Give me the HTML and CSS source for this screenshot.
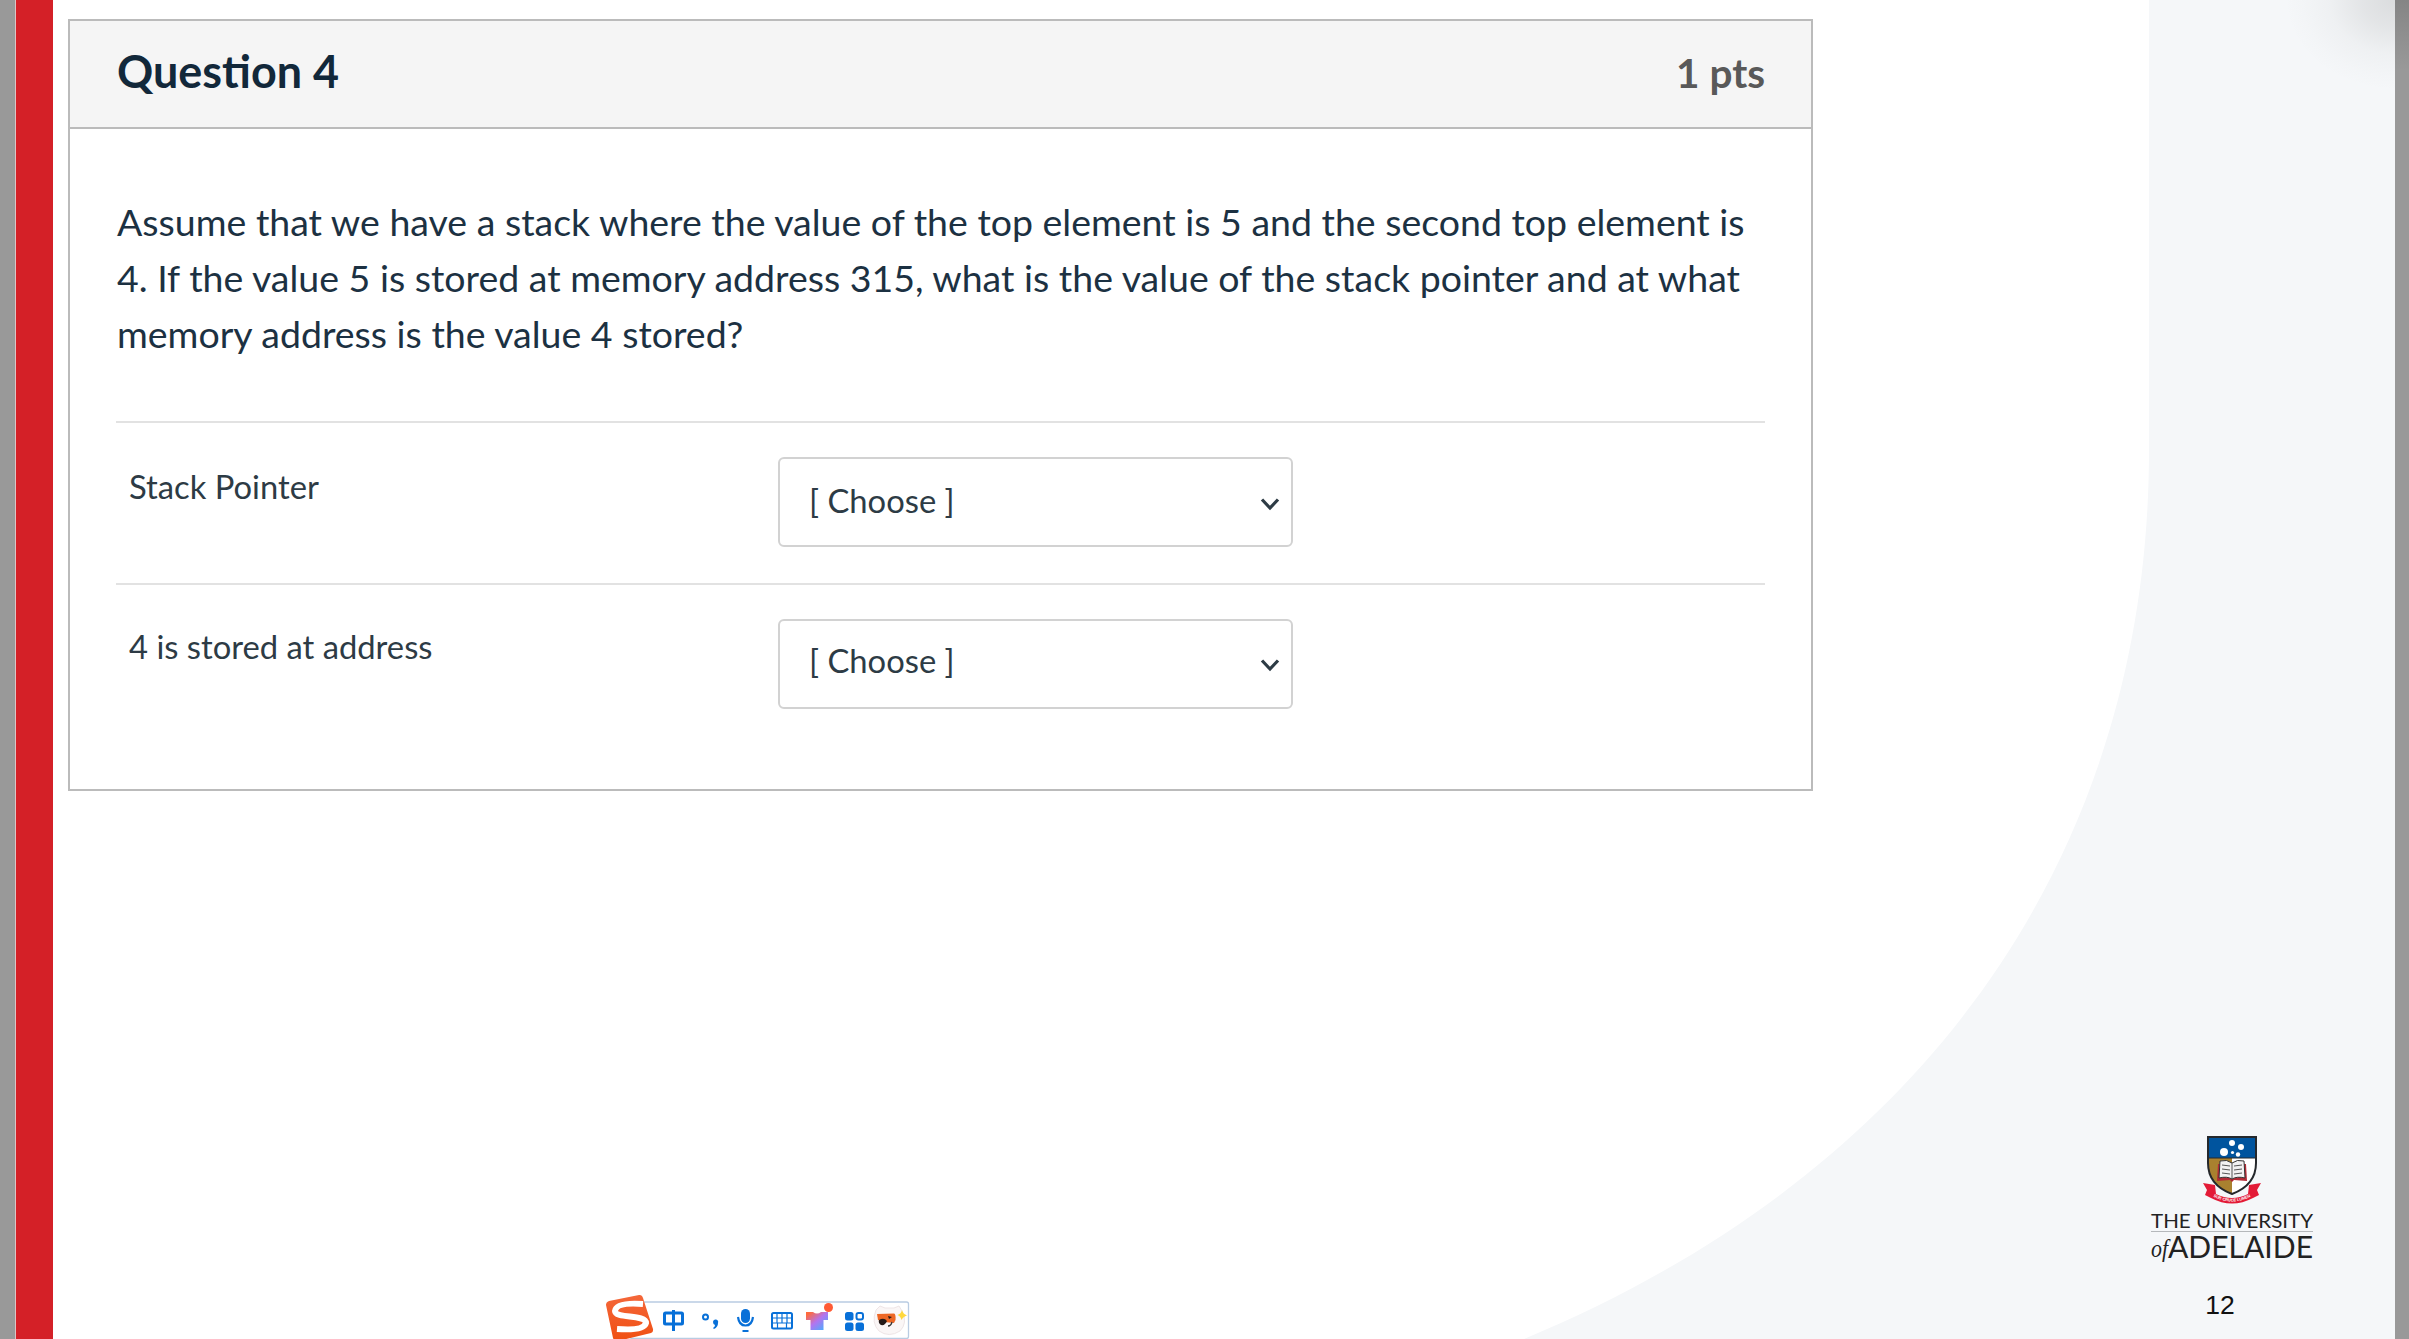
FILE: index.html
```
<!DOCTYPE html>
<html lang="en">
<head>
<meta charset="utf-8">
<title>Question 4</title>
<link rel="stylesheet" href="styles.css">
</head>
<body>
<div class="viewer">
  <div class="accent"></div>
  <main class="slide">
    <svg class="backdrop" width="2342" height="1339" viewBox="53 0 2342 1339" aria-hidden="true">
      <path d="M2149 0V450C2149 850 1930 1170 1524 1339H2395V0Z" fill="#f5f7f9"/>
    </svg>
    <section class="card">
      <header class="card-head">
        <h1 class="title">Question 4</h1>
        <span class="points">1 pts</span>
      </header>
      <div class="card-body">
        <p class="prompt">Assume that we have a stack where the value of the top element is 5 and the second top element is<br>4. If the value 5 is stored at memory address 315, what is the value of the stack pointer and at what<br>memory address is the value 4 stored?</p>
        <div class="row">
          <span class="label">Stack Pointer</span>
          <div class="select"><span class="value">[ Choose ]</span><svg class="chevron" width="20" height="14" viewBox="0 0 20 14"><path d="M2 2.500L10 11L18 2.500" fill="none" stroke="#2d3b45" stroke-width="3.200"/></svg></div>
        </div>
        <div class="row row-last">
          <span class="label">4 is stored at address</span>
          <div class="select"><span class="value">[ Choose ]</span><svg class="chevron" width="20" height="14" viewBox="0 0 20 14"><path d="M2 2.500L10 11L18 2.500" fill="none" stroke="#2d3b45" stroke-width="3.200"/></svg></div>
        </div>
      </div>
    </section>
    <footer class="brand">
      <svg class="crest" width="60" height="70" viewBox="0 0 60 70" aria-hidden="true">
        <path d="M1 48L13 50L14 59Q30 67 46 59L47 50L59 48L55 55L57 60L51 63Q30 74 9 63L3 60L5 55Z" fill="#e31b37"/>
        <path d="M6 2H54V28Q54 50 30 59Q6 50 6 28Z" fill="#fff"/>
        <path d="M6 2H54V23H6Z" fill="#00549e"/>
        <path d="M6 23H30V59Q6 50 6 28Z" fill="#a9812f"/>
        <path d="M6 2H54V28Q54 50 30 59Q6 50 6 28Z" fill="none" stroke="#25282c" stroke-width="2"/>
        <path d="M6 23H54" stroke="#25282c" stroke-width="1"/>
        <g fill="#fff"><circle cx="30" cy="8" r="3"/><circle cx="39" cy="12" r="3"/><circle cx="22" cy="17" r="4"/><circle cx="30.500" cy="17.500" r="1.600"/><circle cx="36" cy="19.500" r="2.200"/></g>
        <path d="M16 29L15 46L28 45L30 47L32 45L45 46L44 29" fill="#b32a35"/>
        <path d="M18 26Q25 24 30 28Q35 24 42 26L43 43Q35 41 30 44Q25 41 17 43Z" fill="#f2f2f2" stroke="#333" stroke-width="1"/>
        <path d="M30 28V44M20 30L28 31M20 34L28 35M20 38L28 39M32 31L40 30M32 35L40 34M32 39L40 38" stroke="#555" stroke-width="1"/>
        <path id="motto" d="M7 59Q30 74 53 59" fill="none"/>
        <text class="motto"><textPath href="#motto" startOffset="50%" text-anchor="middle">SUB CRUCE LUMEN</textPath></text>
      </svg>
      <svg class="wordmark" width="178" height="58" viewBox="-4 -4 178 58">
        <text class="uni" x="2" y="17.500" textLength="162" lengthAdjust="spacingAndGlyphs">THE UNIVERSITY</text>
        <path d="M2 21.500H164" stroke="#b5b8bb"/>
        <text class="of" x="2" y="47" textLength="17" lengthAdjust="spacingAndGlyphs">of</text>
        <text class="ade" x="19" y="47.500" textLength="145" lengthAdjust="spacingAndGlyphs">ADELAIDE</text>
      </svg>
      <span class="page-no">12</span>
    </footer>
    <div class="corner-shade"></div>
  </main>
  <div class="edge"></div>
  <svg class="ime" width="310" height="46" viewBox="603 1293 310 46" aria-hidden="true">
    <defs>
      <linearGradient id="shirt" x1="0" y1="0" x2="1" y2="1"><stop offset=".1" stop-color="#ff6a3c"/><stop offset=".5" stop-color="#b274f0"/><stop offset="1" stop-color="#35b8ff"/></linearGradient>
      <linearGradient id="sogou" x1="0" y1="0" x2="0" y2="1"><stop offset="0" stop-color="#f4673a"/><stop offset="1" stop-color="#f04f12"/></linearGradient>
    </defs>
    <rect x="630" y="1302" width="278.500" height="36.500" rx="2" fill="#fff" stroke="#b9cce2" stroke-width="1.300"/>
    <path d="M609 1301L639 1295Q642 1294.500 643 1298L653 1329Q653.500 1332 651 1333L618 1341Q614 1341 613 1338L606 1305Q606 1302 609 1301Z" fill="url(#sogou)"/>
    <path d="M643 1304Q616 1302 615 1311C615 1319 646 1314 646 1323Q644 1331 617 1329" fill="none" stroke="#fff" stroke-width="6"/>
    <g fill="none" stroke="#0870d8" stroke-width="3">
      <rect x="664.500" y="1313" width="18" height="11" rx="1"/><path d="M673.500 1310V1331"/>
      <circle cx="705.500" cy="1317" r="2.500" stroke-width="2"/>
      <path d="M738 1317Q739 1325.500 745.500 1325.500Q752 1325.500 753 1317" stroke-width="2.200"/>
      <path d="M742.500 1331H748.500" stroke-width="2"/>
      <rect x="772" y="1313" width="20" height="15.500" rx="1.500" stroke-width="2"/>
      <path d="M773 1318H791M773 1323H791M777 1314V1323M782 1314V1323M787 1314V1323M777.500 1323V1328M786.500 1323V1328" stroke-width="1.200"/>
    </g>
    <g fill="#0870d8">
      <path d="M713 1322a2.600 2.600 0 1 1 5 1q0 4-4 6l-1-1q2-1 2-3q-2-.5-2-3Z"/>
      <rect x="741" y="1309" width="9" height="14" rx="4.500"/>
      <rect x="845" y="1312" width="8.500" height="8.500" rx="2.500"/>
      <rect x="845" y="1322.500" width="8.500" height="8.500" rx="2.500"/><rect x="855.500" y="1322.500" width="8.500" height="8.500" rx="2.500"/>
    </g>
    <rect x="856.500" y="1313" width="6.500" height="6.500" rx="2" fill="none" stroke="#0870d8" stroke-width="2"/>
    <path d="M806 1312H813Q817 1315 821 1312H828V1320H823.500V1330H810.500V1320H806Z" fill="url(#shirt)"/>
    <circle cx="828.500" cy="1307.500" r="4.500" fill="#ff5b35"/>
    <path d="M876 1310L880 1306L885 1308H894L899 1306L902 1311Q908 1323 900 1331Q889 1338 879 1331Q871 1323 876 1310Z" fill="#faf6f6" stroke="#eee5e6"/>
    <path d="M877 1314L894 1313.500Q896 1314 895.500 1320L894 1323L884 1322L878 1320Z" fill="#ed6725"/>
    <path d="M879 1320Q884 1317 887 1321Q885 1326 881 1325Q878 1323 879 1320ZM888 1316L892 1317L889 1319Z" fill="#241a18"/>
    <path d="M888 1326Q891 1326 892 1322" fill="none" stroke="#333" stroke-width="1.300"/>
    <path d="M902 1310Q903 1314 907 1315.500Q903 1316.500 901.500 1320Q900.500 1316 897.500 1315Q901 1314 902 1310Z" fill="#ffd83d"/>
  </svg>
</div>
</body>
</html>
```
FILE: styles.css
```
* { box-sizing: border-box; }
body { margin: 0; background: #999; font-family: Lato, "Liberation Sans", sans-serif; color: #2d3b45; }
.viewer { position: relative; display: flex; width: 2409px; height: 1339px; overflow: hidden; padding-left: 15px; }
.accent { width: 38px; background: #d42027; border-left: 1px solid #ddc4c4; flex: none; }
.slide { position: relative; display: flex; flex-direction: column; width: 2342px; background: #fff; padding: 19px 0 0 15px; flex: none; }
.edge { flex: 1; background: linear-gradient(#858585, #999 70px); }
.backdrop { position: absolute; inset: 0; }
.corner-shade { position: absolute; top: 0; right: 0; width: 110px; height: 90px; background: radial-gradient(ellipse 110px 90px at 100% 0, rgba(80,80,80,.16), rgba(80,80,80,.11) 30%, rgba(80,80,80,.04) 60%, rgba(80,80,80,.01) 85%, transparent); }
.card { position: relative; width: 1745px; height: 772px; border: 2px solid #bbb; background: #fff; }
.card-head { display: flex; justify-content: space-between; align-items: center; height: 108px; background: #f5f5f5; border-bottom: 2px solid #bbb; padding: 0 46px 0 47px; }
.title { margin: 0; padding-bottom: 6px; font-size: 44.900px; font-weight: 700; line-height: 54px; color: #12283a; }
.points { padding-bottom: 4px; font-size: 40.500px; font-weight: 700; color: #595959; }
.card-body { padding: 65px 46px 0; }
.prompt { margin: 0 0 41px; padding-left: 1px; font-size: 37.480px; line-height: 56px; white-space: nowrap; color: #1c3142; height: 186px; }
.row { display: flex; height: 161.500px; border-top: 2px solid #e2e2e2; padding: 34px 0 0 13px; }
.label { width: 649px; font-size: 32.750px; line-height: 60px; }
.row-last .label { line-height: 56px; }
.select { display: flex; justify-content: space-between; align-items: center; width: 515px; height: 90px; border: 2px solid #d2d2d2; border-radius: 6px; padding: 0 11px 0 29px; font-size: 32.750px; }
.value { padding-bottom: 3px; }
.row-last .value { padding-bottom: 6px; }
.chevron { margin-top: 3px; }
.brand { position: absolute; left: 2092px; top: 1135px; width: 178px; display: flex; flex-direction: column; align-items: center; }
.crest { margin-right: 4px; overflow: visible; }
.wordmark { margin-top: 1px; overflow: visible; }
.motto { font: bold 4px "Liberation Sans", sans-serif; fill: #fff; }
.uni { font: 20px Lato, sans-serif; fill: #222; }
.of { font: italic 25px "Liberation Serif", serif; fill: #222; }
.ade { font: 30px Lato, sans-serif; fill: #222; }
.page-no { margin: 23px 28px 0 0; font: 26.500px/36px "Liberation Sans", sans-serif; color: #111; }
.ime { position: absolute; left: 603px; top: 1293px; }
```
